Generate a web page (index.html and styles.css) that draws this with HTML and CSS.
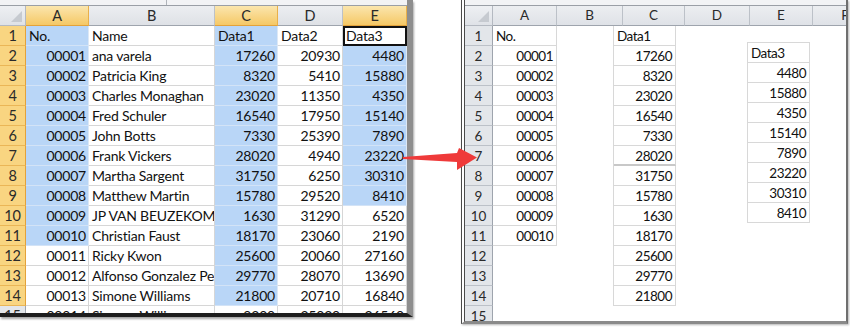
FILE: index.html
```html
<!DOCTYPE html>
<html>
<head>
<meta charset="utf-8">
<link rel="stylesheet" href="styles.css">
</head>
<body>
<div class="stage">
  <div class="sheet-left">
    <div class="fbar"><div class="fbar-seg"></div></div>
    <div class="lgrid">
      <div class="corner"><span class="tri"></span></div>
      <div class="ch sel">A</div><div class="ch">B</div><div class="ch sel">C</div><div class="ch">D</div><div class="ch sel">E</div>

      <div class="rh sel">1</div><div class="c s">No.</div><div class="c">Name</div><div class="c s">Data1</div><div class="c">Data2</div><div class="c active">Data3</div>
      <div class="rh sel">2</div><div class="c n s">00001</div><div class="c">ana varela</div><div class="c n s">17260</div><div class="c n">20930</div><div class="c n s">4480</div>
      <div class="rh sel">3</div><div class="c n s">00002</div><div class="c">Patricia King</div><div class="c n s">8320</div><div class="c n">5410</div><div class="c n s">15880</div>
      <div class="rh sel">4</div><div class="c n s">00003</div><div class="c">Charles Monaghan</div><div class="c n s">23020</div><div class="c n">11350</div><div class="c n s">4350</div>
      <div class="rh sel">5</div><div class="c n s">00004</div><div class="c">Fred Schuler</div><div class="c n s">16540</div><div class="c n">17950</div><div class="c n s">15140</div>
      <div class="rh sel">6</div><div class="c n s">00005</div><div class="c">John Botts</div><div class="c n s">7330</div><div class="c n">25390</div><div class="c n s">7890</div>
      <div class="rh sel">7</div><div class="c n s">00006</div><div class="c">Frank Vickers</div><div class="c n s">28020</div><div class="c n">4940</div><div class="c n s">23220</div>
      <div class="rh sel">8</div><div class="c n s">00007</div><div class="c">Martha Sargent</div><div class="c n s">31750</div><div class="c n">6250</div><div class="c n s">30310</div>
      <div class="rh sel">9</div><div class="c n s">00008</div><div class="c">Matthew Martin</div><div class="c n s">15780</div><div class="c n">29520</div><div class="c n s">8410</div>
      <div class="rh sel">10</div><div class="c n s">00009</div><div class="c">JP VAN BEUZEKOM</div><div class="c n s">1630</div><div class="c n">31290</div><div class="c n">6520</div>
      <div class="rh sel">11</div><div class="c n s">00010</div><div class="c">Christian Faust</div><div class="c n s">18170</div><div class="c n">23060</div><div class="c n">2190</div>
      <div class="rh sel">12</div><div class="c n">00011</div><div class="c">Ricky Kwon</div><div class="c n s">25600</div><div class="c n">20060</div><div class="c n">27160</div>
      <div class="rh sel">13</div><div class="c n">00012</div><div class="c">Alfonso Gonzalez Pena</div><div class="c n s">29770</div><div class="c n">28070</div><div class="c n">13690</div>
      <div class="rh sel">14</div><div class="c n">00013</div><div class="c">Simone Williams</div><div class="c n s">21800</div><div class="c n">20710</div><div class="c n">16840</div>
      <div class="rh">15</div><div class="c n">00014</div><div class="c">Simone Williams</div><div class="c n">9200</div><div class="c n">25020</div><div class="c n">26560</div>
    </div>
  </div>

  <div class="sheet-right">
    <div class="fbar"></div>
    <div class="rhead">
      <div class="corner"><span class="tri"></span></div>
      <div class="rch">A</div><div class="rch">B</div><div class="rch">C</div><div class="rch">D</div><div class="rch">E</div><div class="rch last">F</div>
    </div>
    <div class="rbody">
      <div class="rrows">
        <div class="rrh">1</div><div class="rrh">2</div><div class="rrh">3</div><div class="rrh">4</div><div class="rrh">5</div>
        <div class="rrh">6</div><div class="rrh">7</div><div class="rrh">8</div><div class="rrh">9</div><div class="rrh">10</div>
        <div class="rrh">11</div><div class="rrh">12</div><div class="rrh">13</div><div class="rrh">14</div><div class="rrh">15</div>
      </div>
      <div class="rcol col-a">
        <div class="rc">No.</div>
        <div class="rc n">00001</div><div class="rc n">00002</div><div class="rc n">00003</div><div class="rc n">00004</div><div class="rc n">00005</div>
        <div class="rc n">00006</div><div class="rc n">00007</div><div class="rc n">00008</div><div class="rc n">00009</div><div class="rc n">00010</div>
      </div>
      <div class="rgap gap-b"></div>
      <div class="rcol col-c">
        <div class="rc">Data1</div>
        <div class="rc n">17260</div><div class="rc n">8320</div><div class="rc n">23020</div><div class="rc n">16540</div><div class="rc n">7330</div>
        <div class="rc n thick">28020</div><div class="rc n">31750</div><div class="rc n">15780</div><div class="rc n">1630</div><div class="rc n">18170</div>
        <div class="rc n">25600</div><div class="rc n">29770</div><div class="rc n">21800</div>
      </div>
      <div class="rgap gap-d"></div>
      <div class="rcol col-e">
        <div class="rc">Data3</div>
        <div class="rc n">4480</div><div class="rc n">15880</div><div class="rc n">4350</div><div class="rc n">15140</div>
        <div class="rc n">7890</div><div class="rc n">23220</div><div class="rc n">30310</div><div class="rc n">8410</div>
      </div>
    </div>
  </div>

  <svg class="arrow" width="80" height="30" viewBox="400 145 80 30">
    <polygon points="403,157 457,153 459,148 477,157.5 457,170 457,162 403,159" fill="#ef3a3a"/>
  </svg>
</div>
</body>
</html>
```

FILE: styles.css
```css
html, body {
  margin: 0;
  padding: 0;
  background: #ffffff;
}
body {
  width: 850px;
  height: 329px;
  overflow: hidden;
  font-family: Lato, "Liberation Sans", sans-serif;
  font-size: 14px;
  letter-spacing: -0.2px;
  color: #111;
}
.stage {
  position: relative;
  display: flex;
  align-items: flex-start;
  width: 850px;
  height: 329px;
}

/* ---------- left sheet ---------- */
.sheet-left {
  width: 407px;
  height: 313px;
  overflow: hidden;
  border-right: 6px solid #8e8e8e;
  border-bottom: 4px solid #1e1e1e;
  box-shadow: 1px 2px 2px rgba(0,0,0,0.35);
  background: #fff;
}
.fbar {
  height: 5px;
  background: #f2f3f5;
  border-bottom: 1px solid #9a9fa6;
  display: flex;
}
.fbar-seg {
  width: 166px;
  border-right: 1px solid #b0b4ba;
}
.lgrid {
  display: grid;
  grid-template-columns: 26px 63px 126px 63px 65px 64px;
  grid-auto-rows: 20px;
}
.corner {
  position: relative;
  background: linear-gradient(#eef0f3, #dfe2e7);
  border-right: 1px solid #b4b9c1;
  border-bottom: 1px solid #b4b9c1;
  box-sizing: border-box;
}
.tri {
  position: absolute;
  right: 3px;
  bottom: 3px;
  width: 0;
  height: 0;
  border-left: 11px solid transparent;
  border-bottom: 11px solid #c6cad0;
}
.ch {
  box-sizing: border-box;
  background: linear-gradient(#eceef1, #dee1e6);
  border-right: 1px solid #bcc1c8;
  border-bottom: 1px solid #9ea4ad;
  text-align: center;
  line-height: 19px;
  color: #2a2a2a;
  font-size: 14.5px;
}
.ch.sel {
  background: linear-gradient(#fbe6ae, #f5c866);
  border-right: 1px solid #e9b04a;
  border-bottom: 1px solid #e3a23a;
}
.rh {
  box-sizing: border-box;
  background: #e3e6ea;
  border-right: 1px solid #9ea4ad;
  border-bottom: 1px solid #bcc1c8;
  text-align: center;
  line-height: 19px;
  color: #2a2a2a;
  font-size: 14.5px;
}
.rh.sel {
  background: #f9d581;
  border-right: 1px solid #e3a23a;
  border-bottom: 1px solid #eab657;
}
.c {
  box-sizing: border-box;
  border-right: 1px solid #d6d6d6;
  border-bottom: 1px solid #d6d6d6;
  padding: 0 2px 0 3px;
  line-height: 20px;
  white-space: nowrap;
  overflow: hidden;
}
.c.n {
  text-align: right;
}
.c.s {
  background: #b9d6f7;
  border-bottom-color: #d3e3f6;
  border-right-color: #dce8f6;
}
.c.active {
  border: 2px solid #111;
  line-height: 16px;
  padding-left: 1px;
}

/* ---------- right sheet ---------- */
.sheet-right {
  margin-left: 48px;
  width: 381px;
  height: 321px;
  overflow: hidden;
  border-left: 4px double #4a4a4a;
  border-right: 2px solid #6f6f6f;
  border-bottom: 3px solid #8a8a8a;
  box-shadow: 1px 1px 2px rgba(0,0,0,0.3);
  background: #fff;
  font-size: 13.5px;
  letter-spacing: -0.5px;
}
.rhead {
  display: grid;
  grid-template-columns: 28px 64px 66px 62px 65px 63px 64px;
  height: 20px;
}
.rch {
  box-sizing: border-box;
  background: linear-gradient(#eceef1, #dfe2e7);
  border-right: 1px solid #bcc1c8;
  border-bottom: 1px solid #9ea4ad;
  text-align: center;
  line-height: 19px;
  color: #2a2a2a;
  letter-spacing: 0;
}
.rch.last {
  border-right: none;
}
.rbody {
  display: flex;
  align-items: flex-start;
}
.rrows {
  width: 28px;
}
.rrh {
  box-sizing: border-box;
  height: 20px;
  background: #e3e6ea;
  border-right: 1px solid #9ea4ad;
  border-bottom: 1px solid #bcc1c8;
  text-align: center;
  line-height: 21px;
  color: #2a2a2a;
  letter-spacing: 0;
}
.rcol {
  box-sizing: border-box;
}
.rc {
  box-sizing: border-box;
  height: 20px;
  border-bottom: 1px solid #d8d8d8;
  border-right: 1px solid #d8d8d8;
  padding: 0 3px 0 3px;
  line-height: 21px;
  white-space: nowrap;
}
.rc.n {
  text-align: right;
}
.rc.thick {
  border-bottom: 2px solid #c8c8c8;
}
.col-a {
  width: 64px;
}
.gap-b {
  width: 56px;
}
.col-c {
  width: 63px;
  border-left: 1px solid #d8d8d8;
}
.gap-d {
  width: 71px;
}
.col-e {
  width: 63px;
  margin-top: 16px;
  border-left: 1px solid #d8d8d8;
  border-top: 1px solid #d8d8d8;
}

/* ---------- arrow ---------- */
.arrow {
  position: absolute;
  left: 400px;
  top: 145px;
}
```
